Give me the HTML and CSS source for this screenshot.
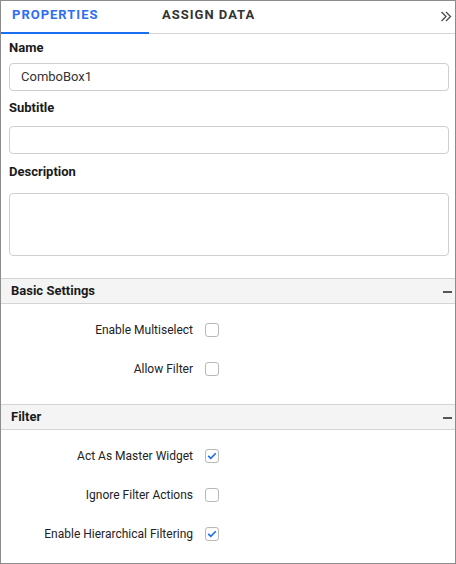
FILE: index.html
```html
<!DOCTYPE html>
<html>
<head>
<meta charset="utf-8">
<link rel="stylesheet" href="styles.css">
</head>
<body>
<div class="panel">
  <div class="tabs">
    <div class="tab tab-active">PROPERTIES</div>
    <div class="tab">ASSIGN DATA</div>
    <div class="tab-collapse">
      <svg width="12" height="11" viewBox="0 0 12 11"><path d="M1.5 1 L6 5.5 L1.5 10 M6 1 L10.5 5.5 L6 10" fill="none" stroke="#4a4a4a" stroke-width="1.3"/></svg>
    </div>
  </div>
  <div class="fields">
    <div class="lbl lbl-name">Name</div>
    <div class="input input-name">ComboBox1</div>
    <div class="lbl lbl-sub">Subtitle</div>
    <div class="input input-sub"></div>
    <div class="lbl lbl-desc">Description</div>
    <div class="textarea"></div>
  </div>
  <div class="section-head section-basic">
    <span>Basic Settings</span>
    <span class="minus"></span>
  </div>
  <div class="section-body section-body-basic">
    <div class="row"><span class="row-label">Enable Multiselect</span><span class="cb"></span></div>
    <div class="row"><span class="row-label">Allow Filter</span><span class="cb"></span></div>
  </div>
  <div class="section-head">
    <span>Filter</span>
    <span class="minus"></span>
  </div>
  <div class="section-body">
    <div class="row"><span class="row-label">Act As Master Widget</span><span class="cb"><svg width="12" height="12" viewBox="0 0 12 12"><path d="M2.2 5.8 L4.8 8.3 L9.8 3.2" fill="none" stroke="#1a6ef0" stroke-width="1.6"/></svg></span></div>
    <div class="row"><span class="row-label">Ignore Filter Actions</span><span class="cb"></span></div>
    <div class="row"><span class="row-label">Enable Hierarchical Filtering</span><span class="cb"><svg width="12" height="12" viewBox="0 0 12 12"><path d="M2.2 5.8 L4.8 8.3 L9.8 3.2" fill="none" stroke="#1a6ef0" stroke-width="1.6"/></svg></span></div>
  </div>
</div>
</body>
</html>
```
FILE: styles.css
```css
html, body {
  margin: 0;
  padding: 0;
  background: #fff;
}
.panel {
  width: 456px;
  height: 564px;
  box-sizing: border-box;
  border: 1px solid #8c8c8c;
  font-family: Roboto, "Liberation Sans", sans-serif;
  color: #222;
  overflow: hidden;
}
.tabs {
  display: flex;
  height: 32px;
  border-bottom: 1px solid #d4d4d4;
}
.tab {
  box-sizing: border-box;
  height: 33px;
  padding: 5px 0 0 13px;
  line-height: 18px;
  font-size: 13px;
  font-weight: 700;
  letter-spacing: 1px;
  color: #333;
  width: 148px;
}
.tab-active {
  padding-left: 11px;
  color: #2f6ef3;
  border-bottom: 2px solid #1a6ef0;
}
.tab-collapse {
  margin-left: auto;
  padding: 10px 3px 0 0;
}
.tab-collapse svg {
  display: block;
}
.fields {
  padding: 0 6px 0 8px;
}
.lbl {
  height: 16px;
  line-height: 16px;
  font-size: 13px;
  font-weight: 700;
  color: #1a1a1a;
}
.lbl-name { margin-top: 6px; }
.lbl-sub { margin-top: 9px; }
.lbl-desc { margin-top: 10px; }
.input, .textarea {
  box-sizing: border-box;
  border: 1px solid #cfcfcf;
  border-radius: 4px;
  background: #fff;
}
.input {
  height: 28px;
  line-height: 26px;
  padding-left: 11px;
  font-size: 13px;
  color: #333;
}
.input-name { margin-top: 7px; }
.input-sub { margin-top: 10px; }
.textarea {
  margin-top: 13px;
  height: 63px;
}
.section-head {
  box-sizing: border-box;
  height: 26px;
  border-top: 1px solid #d4d4d4;
  border-bottom: 1px solid #d4d4d4;
  background: #f4f4f4;
  display: flex;
  align-items: center;
  justify-content: space-between;
  padding: 0 3px 0 10px;
  line-height: 24px;
  font-size: 13px;
  font-weight: 700;
  color: #1a1a1a;
}
.section-basic {
  margin-top: 22px;
}
.minus {
  width: 9px;
  height: 2px;
  background: #555;
  margin-top: 1px;
}
.section-body {
  display: flex;
  flex-direction: column;
  gap: 19px;
  padding-top: 16px;
}
.section-body-basic {
  padding-bottom: 25px;
}
.row {
  display: grid;
  grid-template-columns: 192px 14px;
  column-gap: 12px;
  align-items: center;
  height: 20px;
}
.row-label {
  text-align: right;
  font-size: 12px;
  color: #222;
}
.cb {
  box-sizing: border-box;
  width: 14px;
  height: 14px;
  border: 1px solid #b8b8b8;
  border-radius: 3px;
  background: #fff;
  display: flex;
  align-items: center;
  justify-content: center;
}
.cb svg {
  display: block;
}
```
